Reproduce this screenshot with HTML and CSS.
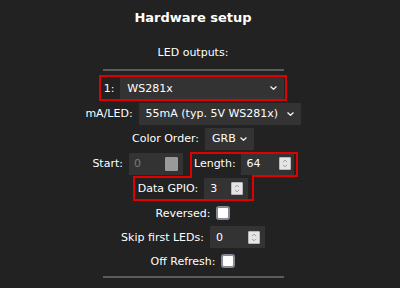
FILE: index.html
```html
<!DOCTYPE html>
<html>
<head>
<meta charset="utf-8">
<link rel="stylesheet" href="styles.css">
</head>
<body>
<div class="page">
  <h2 class="title">Hardware setup</h2>
  <div class="sub">LED outputs:</div>
  <div class="rule"></div>

  <div class="row r1">
    <div class="boxed">
      <span>1:</span>
      <div class="sel w1"><span>WS281x</span><svg class="chev" viewBox="0 0 7 4" width="7" height="4"><path d="M0.5 0.5 L3.5 3.3 L6.5 0.5" /></svg></div>
    </div>
  </div>

  <div class="row">
    <span>mA/LED:</span>
    <div class="sel w2"><span>55mA (typ. 5V WS281x)</span><svg class="chev" viewBox="0 0 7 4" width="7" height="4"><path d="M0.5 0.5 L3.5 3.3 L6.5 0.5" /></svg></div>
  </div>

  <div class="row">
    <span>Color Order:</span>
    <div class="sel w3"><span>GRB</span><svg class="chev" viewBox="0 0 7 4" width="7" height="4"><path d="M0.5 0.5 L3.5 3.3 L6.5 0.5" /></svg></div>
  </div>

  <div class="row r4">
    <span>Start:</span>
    <div class="num ns dis"><span>0</span><span class="spin off"></span></div>
    <div class="grp">
      <span>Length:</span>
      <div class="num nl"><span>64</span><span class="spin"><svg viewBox="0 0 12 13" width="10" height="11"><path d="M3.5 5 L6 2.5 L8.5 5 M3.5 8 L6 10.5 L8.5 8" /></svg></span></div>
    </div>
  </div>

  <div class="row r5">
    <span>Data GPIO:</span>
    <div class="num ng"><span>3</span><span class="spin"><svg viewBox="0 0 12 13" width="10" height="11"><path d="M3.5 5 L6 2.5 L8.5 5 M3.5 8 L6 10.5 L8.5 8" /></svg></span></div>
  </div>

  <div class="row t">
    <span>Reversed:</span>
    <span class="cb"></span>
  </div>

  <div class="row t">
    <span>Skip first LEDs:</span>
    <div class="num nk"><span>0</span><span class="spin"><svg viewBox="0 0 12 13" width="10" height="11"><path d="M3.5 5 L6 2.5 L8.5 5 M3.5 8 L6 10.5 L8.5 8" /></svg></span></div>
  </div>

  <div class="row t">
    <span>Off Refresh:</span>
    <span class="cb"></span>
  </div>

  <div class="rule r2"></div>
</div>

<svg class="mark" width="400" height="288" viewBox="0 0 400 288">
  <polygon points="191,153 297,153 297,176 253,176 253,200 134,200 134,177 191,177" />
</svg>
</body>
</html>
```

FILE: styles.css
```css
html, body {
  margin: 0;
  padding: 0;
  background: #222;
}
body {
  width: 400px;
  height: 288px;
  overflow: hidden;
  position: relative;
  color: #fff;
  font-family: "DejaVu Sans", Verdana, sans-serif;
  font-size: 11px;
}
.page {
  width: 386px;
  text-align: center;
}
.title {
  margin: 10px 0 0;
  font-size: 13px;
  line-height: 16px;
  font-weight: bold;
}
.sub {
  margin-top: 20px;
  line-height: 14px;
}
.rule {
  width: 181px;
  height: 2px;
  background: #5c5c5c;
  margin: 9px auto 0;
}
.rule.r2 {
  margin-top: 3px;
}
.row {
  display: flex;
  justify-content: center;
  align-items: center;
  gap: 6px;
  height: 25px;
}
.row.t {
  height: 24px;
}
.row.r1 {
  margin-top: 4px;
  height: 26px;
}
.boxed {
  display: flex;
  align-items: center;
  gap: 6px;
  height: 22px;
  border: 2px solid #e00000;
  padding: 0 1px 0 3px;
}
.sel {
  display: flex;
  align-items: center;
  justify-content: space-between;
  box-sizing: border-box;
  height: 22px;
  padding: 0 7px 0 7px;
  background: #333;
}
.w1 { width: 164px; }
.w2 { width: 162px; }
.w3 { width: 49px; }
.chev {
  fill: none;
  stroke: #eee;
  stroke-width: 1.3;
}
.num {
  display: flex;
  align-items: center;
  justify-content: space-between;
  box-sizing: border-box;
  height: 22px;
  padding: 0 5px 0 6px;
  background: #333;
}
.ns { width: 54px; padding-left: 5px; }
.nl { width: 53px; padding-right: 3px; }
.ng { width: 44px; }
.nk { width: 55px; }
.dis span:first-child {
  color: #7a7a7a;
}
.spin {
  display: flex;
  align-items: center;
  justify-content: center;
  box-sizing: border-box;
  width: 12px;
  height: 13px;
  background: #e6e6e6;
  border: 1px solid #b8b8b8;
  border-radius: 1px;
}
.spin svg {
  fill: none;
  stroke: #8c8c8c;
  stroke-width: 1;
}
.spin.off {
  width: 13px;
  height: 14px;
  background: #9a9a9a;
  border-color: #9a9a9a;
}
.grp {
  display: flex;
  align-items: center;
  gap: 5px;
  margin-left: 5px;
}
.cb {
  display: block;
  box-sizing: border-box;
  width: 14px;
  height: 14px;
  background: #fff;
  border: 2px solid #8a8898;
  border-radius: 3px;
}
.mark {
  position: absolute;
  left: 0;
  top: 0;
  pointer-events: none;
}
.mark polygon {
  fill: none;
  stroke: #e00000;
  stroke-width: 2;
}
```
